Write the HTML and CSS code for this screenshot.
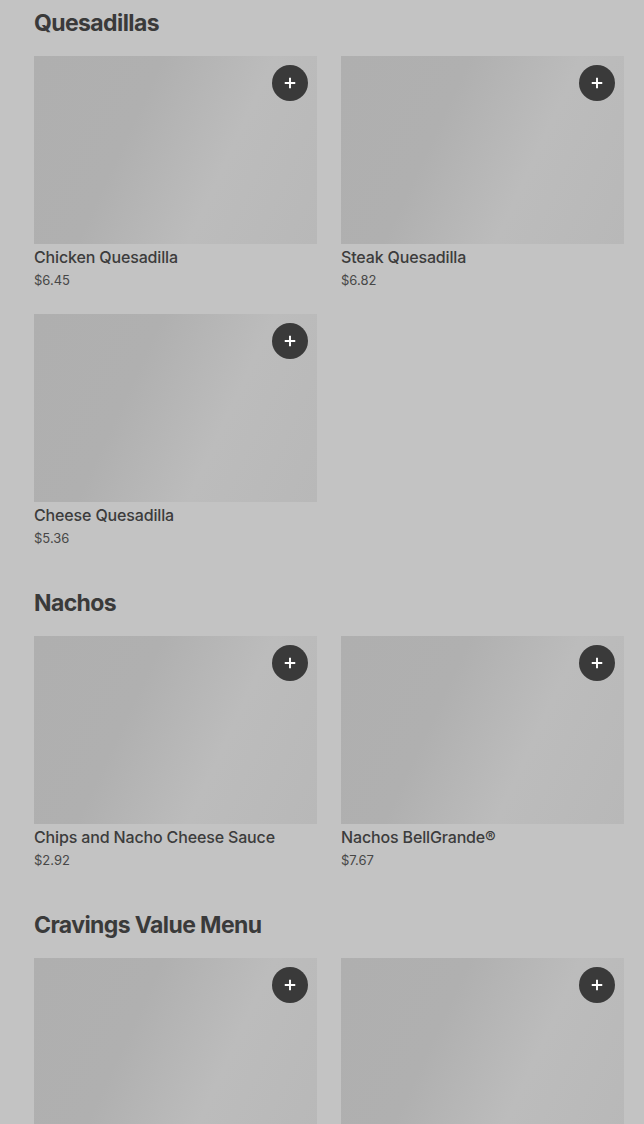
FILE: index.html
```html
<!DOCTYPE html>
<html>
<head>
<meta charset="utf-8">
<link rel="stylesheet" href="styles.css">
</head>
<body>
<main class="menu">
  <section class="section">
    <h2 class="section-title">Quesadillas</h2>
    <div class="grid">
      <div class="card">
        <div class="thumb"><button class="add"><svg viewBox="0 0 16 16" width="14" height="14"><path d="M8 2v12M2 8h12" stroke="#fff" stroke-width="2.2" fill="none"/></svg></button></div>
        <div class="name">Chicken Quesadilla</div>
        <div class="price">$6.45</div>
      </div>
      <div class="card">
        <div class="thumb"><button class="add"><svg viewBox="0 0 16 16" width="14" height="14"><path d="M8 2v12M2 8h12" stroke="#fff" stroke-width="2.2" fill="none"/></svg></button></div>
        <div class="name">Steak Quesadilla</div>
        <div class="price">$6.82</div>
      </div>
      <div class="card">
        <div class="thumb"><button class="add"><svg viewBox="0 0 16 16" width="14" height="14"><path d="M8 2v12M2 8h12" stroke="#fff" stroke-width="2.2" fill="none"/></svg></button></div>
        <div class="name">Cheese Quesadilla</div>
        <div class="price">$5.36</div>
      </div>
    </div>
  </section>
  <section class="section">
    <h2 class="section-title">Nachos</h2>
    <div class="grid">
      <div class="card">
        <div class="thumb"><button class="add"><svg viewBox="0 0 16 16" width="14" height="14"><path d="M8 2v12M2 8h12" stroke="#fff" stroke-width="2.2" fill="none"/></svg></button></div>
        <div class="name">Chips and Nacho Cheese Sauce</div>
        <div class="price">$2.92</div>
      </div>
      <div class="card">
        <div class="thumb"><button class="add"><svg viewBox="0 0 16 16" width="14" height="14"><path d="M8 2v12M2 8h12" stroke="#fff" stroke-width="2.2" fill="none"/></svg></button></div>
        <div class="name">Nachos BellGrande®</div>
        <div class="price">$7.67</div>
      </div>
    </div>
  </section>
  <section class="section">
    <h2 class="section-title">Cravings Value Menu</h2>
    <div class="grid">
      <div class="card">
        <div class="thumb"><button class="add"><svg viewBox="0 0 16 16" width="14" height="14"><path d="M8 2v12M2 8h12" stroke="#fff" stroke-width="2.2" fill="none"/></svg></button></div>
      </div>
      <div class="card">
        <div class="thumb"><button class="add"><svg viewBox="0 0 16 16" width="14" height="14"><path d="M8 2v12M2 8h12" stroke="#fff" stroke-width="2.2" fill="none"/></svg></button></div>
      </div>
    </div>
  </section>
</main>
</body>
</html>
```
FILE: styles.css
```css
html, body {
  margin: 0;
  padding: 0;
  background: #c3c3c3;
  overflow: hidden;
}
body {
  font-family: Inter, "Liberation Sans", sans-serif;
  color: #3c3c3c;
}
.menu {
  padding: 7px 20px 0 34px;
  display: flex;
  flex-direction: column;
  gap: 39px;
}
.section-title {
  margin: 0 0 17px;
  font-size: 23px;
  line-height: 32px;
  font-weight: 700;
  letter-spacing: -0.6px;
  color: #3a3a3a;
}
.grid {
  display: grid;
  grid-template-columns: 283px 283px;
  column-gap: 24px;
  row-gap: 24px;
}
.card {
  display: flex;
  flex-direction: column;
}
.thumb {
  position: relative;
  height: 188px;
  background: linear-gradient(115deg, #afafaf 0%, #b0b0b0 35%, #bcbcbc 65%, #b8b8b8 100%);
}
.add {
  position: absolute;
  top: 9px;
  right: 9px;
  width: 36px;
  height: 36px;
  border-radius: 50%;
  border: none;
  padding: 0;
  background: #3a3a3a;
  display: flex;
  align-items: center;
  justify-content: center;
}
.add svg { display: block; }
.name {
  margin-top: 3px;
  font-size: 16px;
  line-height: 20px;
  font-weight: 500;
  letter-spacing: -0.15px;
  color: #3c3c3c;
}
.price {
  margin-top: 3px;
  font-size: 13px;
  line-height: 20px;
  color: #474747;
}
```
